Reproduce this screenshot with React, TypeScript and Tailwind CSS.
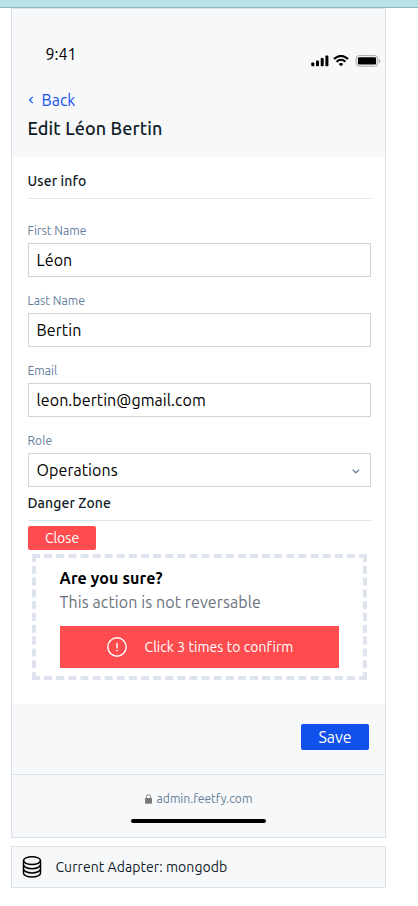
import React from "react";

function Field({ label, value, select = false }: {
  label: string;
  value: string;
  select?: boolean;
}) {
  return (
    <div className="flex h-[70px] flex-col">
      <div className="-ml-[0.5px] flex h-[26px] items-center pt-[3px] text-[12.2px] text-[#64809c]">{label}</div>
      <div className="flex h-[34px] items-center justify-between border border-[#d1d3da] bg-white pl-[7.6px] pr-[11px] text-base tracking-[0.06px] text-black">
        <span>{value}</span>
        {select && (
          <svg width="7" height="5" viewBox="0 0 7 5" className="mt-[3px]" fill="none" stroke="#64809c" strokeWidth="1.2">
            <path d="M.7 .8 3.8 3.8 6.9 .8" />
          </svg>
        )}
      </div>
    </div>
  );
}

function StatusIcons() {
  return (
    <svg width="70" height="12" viewBox="0 0 70 12">
      <rect x="0.3" y="7.5" width="3" height="3.7" rx=".8" />
      <rect x="5" y="5.5" width="3" height="5.7" rx=".8" />
      <rect x="9.7" y="3" width="3" height="8.2" rx=".8" />
      <rect x="14.4" y="0.6" width="3" height="10.6" rx=".8" />
      <g fill="none" stroke="#000">
        <path d="M23 4.1Q30 -2.3 37 4.1" strokeWidth="2.1" />
        <path d="M25.5 6.8Q30 2.7 34.5 6.8" strokeWidth="2" />
      </g>
      <path d="M27.7 8.9Q30 7 32.3 8.9L30 11.3Z" />
      <rect x="45.2" y="0.6" width="21.6" height="10.6" rx="3" fill="none" stroke="#a7a8aa" />
      <rect x="46.9" y="2.2" width="18.2" height="7.4" rx="1.3" />
      <path d="M68 4v4q1.3-.6 1.3-2T68 4" fill="#a7a8aa" />
    </svg>
  );
}

function DatabaseIcon() {
  return (
    <svg width="20" height="24" viewBox="0 0 20 24" fill="none" stroke="#000" strokeWidth="1.5">
      <ellipse cx="10" cy="5.6" rx="8.5" ry="3.9" />
      <path d="M1.5 5.6v12.6c0 2.1 3.8 3.9 8.5 3.9s8.5-1.8 8.5-3.9V5.6" />
      <path d="M1.5 9.8c0 2.1 3.8 3.9 8.5 3.9s8.5-1.8 8.5-3.9M1.5 14c0 2.1 3.8 3.9 8.5 3.9s8.5-1.8 8.5-3.9" />
    </svg>
  );
}

export default function App() {
  return (
    <div className="h-[906px] w-[418px] overflow-hidden bg-white font-['Ubuntu','Noto_Sans',sans-serif] whitespace-nowrap">
      <div className="h-2 border-b border-[#8eb5bd] bg-[#b8e2e5]" />
      <main className="ml-[11px] w-[375px]">
        <div className="flex h-[830px] flex-col border border-[#d8e0e9] bg-white">
          <header className="h-[148px] bg-[#f6f8fa]">
            <div className="flex h-[79px] items-end justify-between pl-[33.6px] pr-1">
              <span className="mb-[22px] text-base leading-6 text-black">9:41</span>
              <div className="mb-[21px]"><StatusIcons /></div>
            </div>
            <div className="flex h-6 items-center pl-4 text-base text-[#1652ed]">
              <svg width="6" height="8" viewBox="0 0 6 8" fill="none" stroke="currentColor" strokeWidth="1.2" className="mr-[7.5px]">
                <path d="M4.7 .9 1.6 4 4.7 7.1" />
              </svg>
              Back
            </div>
            <h1 className="flex h-8 items-center pl-[15.5px] text-lg font-medium tracking-[0.12px] text-[#111b27]">Edit Léon Bertin</h1>
          </header>
          <section className="h-[547px] pl-4 pr-[14px]">
            <h2 className="flex h-[42px] items-center border-b border-[#dce3ec] pt-[7px] text-sm font-medium tracking-[0.1px] text-[#111b27]"><span className="-ml-[0.5px]">User info</span></h2>
            <div className="pt-[18px]">
              <Field label="First Name" value="Léon" />
              <Field label="Last Name" value="Bertin" />
              <Field label="Email" value="leon.bertin@gmail.com" />
              <Field label="Role" value="Operations" select />
            </div>
            <h2 className="-mt-[10px] flex h-[34px] items-center border-b border-[#dce3ec] pb-[2px] text-sm font-medium tracking-[0.08px] text-[#111b27]"><span className="-ml-[0.5px]">Danger Zone</span></h2>
            <button className="mt-[5px] flex h-6 w-[68px] items-center justify-center rounded-[2px] bg-[#ff4d4f] text-sm text-white">Close</button>
            <div className="mx-1 mt-1 h-[126px] border-4 border-dashed border-[#dde4ee] px-6 pt-2">
              <h3 className="-ml-[0.5px] h-6 text-base font-bold leading-6 tracking-[0.14px] text-black">Are you sure?</h3>
              <p className="-ml-[0.5px] h-6 text-base leading-6 tracking-[0.1px] text-[#6b7280]">This action is not reversable</p>
              <button className="mt-3 flex h-[42px] w-full items-center bg-[#ff4d4f] pl-[47px] text-white">
                <svg width="20" height="20" viewBox="0 0 20 20" fill="none" stroke="#fff" strokeWidth="1.4">
                  <circle cx="10" cy="10" r="9.2" />
                  <path d="M10 6v5.2M10 12.8v1.5" />
                </svg>
                <span className="ml-[17.5px] text-sm tracking-[0.05px]">Click 3 times to confirm</span>
              </button>
            </div>
          </section>
          <div className="flex h-[71px] items-start justify-end border-b border-[#d8e0e9] bg-[#f6f8fa] pr-4 pt-5">
            <button className="flex h-[26px] w-[68px] items-center justify-center rounded-[2px] bg-[#1150eb] text-base text-white">Save</button>
          </div>
          <footer className="flex h-[62px] flex-col items-center bg-[#f7f8f9] pt-[14px]">
            <div className="flex h-5 items-center text-[12.1px] text-[#64809c]">
              <svg width="7" height="10" viewBox="0 0 7 10" className="mr-[5px]" fill="none">
                <path d="M1.4 4.5V2.8a2.1 2.1 0 0 1 4.2 0v1.7" stroke="#85888b" />
                <rect y="4" width="7" height="5.7" rx="1" fill="#77797b" />
              </svg>
              admin.feetfy.com
            </div>
            <div className="mt-[10px] h-1 w-[135px] rounded-full bg-black" />
          </footer>
        </div>
        <div className="mt-2 flex h-[42px] items-center border border-[#d8e0e9] bg-[#f6f8fa] pl-[10px]">
          <DatabaseIcon />
          <span className="ml-[13.6px] text-sm tracking-[0.06px] text-[#111b27]">Current Adapter: mongodb</span>
        </div>
      </main>
    </div>
  );
}
